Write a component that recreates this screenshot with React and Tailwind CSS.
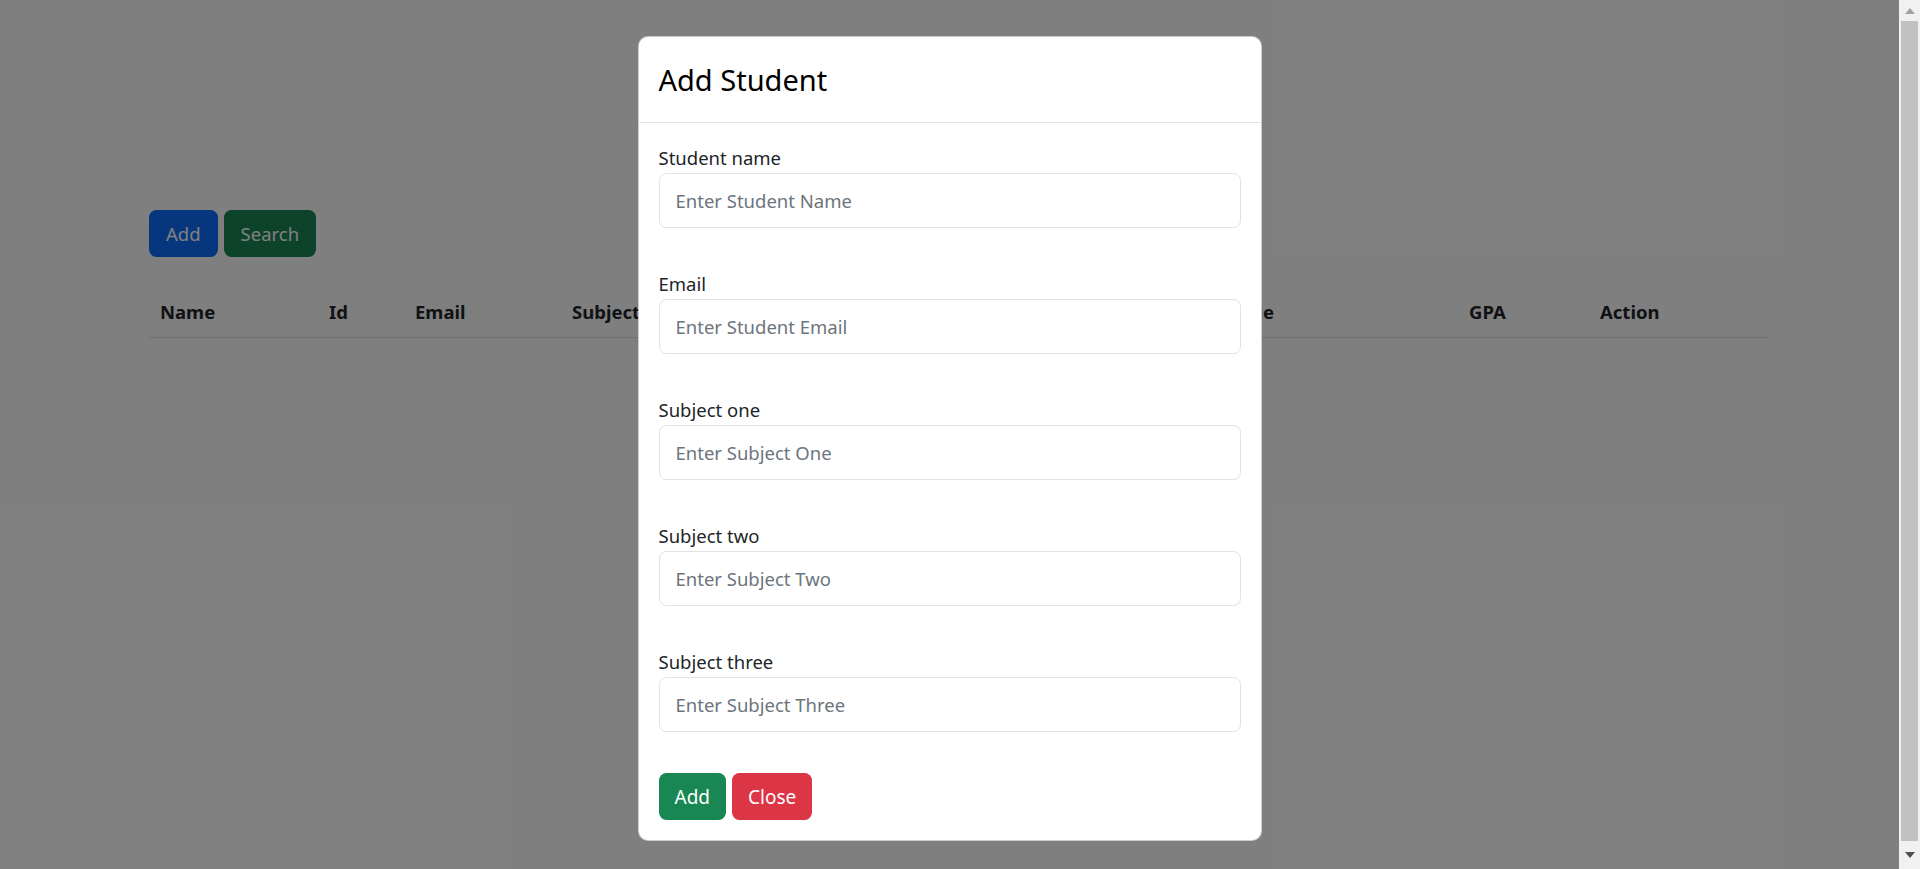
export default function App() {
  const fields = [
    ["Student name", "Enter Student Name"],
    ["Email", "Enter Student Email"],
    ["Subject one", "Enter Subject One"],
    ["Subject two", "Enter Subject Two"],
    ["Subject three", "Enter Subject Three"],
  ];
  const cols = [
    ["Name", 169],
    ["Id", 86],
    ["Email", 157],
    ["Subject One", 209],
    ["Subject Two", 209],
    ["Subject Three", 208],
    ["Average", 271],
    ["GPA", 131],
    ["Action", 180],
  ];
  return (
    <div className="flex h-[869px] w-full overflow-hidden font-['Segoe_UI','Noto_Sans',sans-serif] text-[#212529]">
      <div className="relative flex-1 bg-white">
        <div className="pl-[149px] pt-[210px]">
          <div className="flex gap-[6px]">
            <button className="h-[47px] rounded-[7.5px] bg-[#0d6efd] px-[17px] text-[18.5px] leading-[30px] text-white">
              Add
            </button>
            <button className="h-[47px] rounded-[7.5px] bg-[#198754] px-[17px] text-[18.5px] leading-[30px] text-white">
              Search
            </button>
          </div>
          <table className="mt-[30px] w-[1620px] table-fixed border-collapse">
            <colgroup>
              {cols.map(([n, w]) => (
                <col key={n} style={{ width: w }} />
              ))}
            </colgroup>
            <thead>
              <tr>
                {cols.map(([n]) => (
                  <th
                    key={n}
                    className="border-b border-[#dee2e6] px-[11px] py-[10px] text-left text-[18.5px] font-bold leading-[30px] whitespace-nowrap"
                  >
                    {n}
                  </th>
                ))}
              </tr>
            </thead>
          </table>
        </div>

        <div className="absolute inset-0 flex items-start justify-center bg-black/50 pt-[36px]">
          <div className="w-[624px] rounded-[10px] border border-black/20 bg-white">
            <div className="border-b border-[#dee2e6] px-[20px] py-[20px]">
              <h4 className="text-[29px] font-normal leading-[45px] text-black">Add Student</h4>
            </div>
            <div className="p-[20px]">
              {fields.map(([label, ph]) => (
                <div key={label} className="mb-[41px]">
                  <label className="block text-[18.5px] leading-[30px]">{label}</label>
                  <input
                    className="block h-[55px] w-full rounded-[7.5px] border border-[#dee2e6] px-[16px] text-[18.5px] outline-none placeholder:text-[#6c757d]"
                    placeholder={ph}
                  />
                </div>
              ))}
              <div className="flex gap-[6px]">
                <button className="h-[47px] rounded-[7.5px] bg-[#198754] px-[16px] text-[19px] leading-[30px] text-white">
                  Add
                </button>
                <button className="h-[47px] rounded-[7.5px] bg-[#dc3545] px-[16px] text-[19px] leading-[30px] text-white">
                  Close
                </button>
              </div>
            </div>
          </div>
        </div>
      </div>

      <div className="flex w-[21px] flex-col bg-[#f1f1f1]">
        <div className="flex h-[21px] items-center justify-center">
          <svg width="10" height="6" viewBox="0 0 10 6">
            <polygon points="5,0 10,6 0,6" fill="#a3a3a3" />
          </svg>
        </div>
        <div className="mx-[2px] flex-1 bg-[#c1c1c1]" />
        <div className="flex h-[28px] items-center justify-center">
          <svg width="10" height="6" viewBox="0 0 10 6">
            <polygon points="0,0 10,0 5,6" fill="#505050" />
          </svg>
        </div>
      </div>
    </div>
  );
}
